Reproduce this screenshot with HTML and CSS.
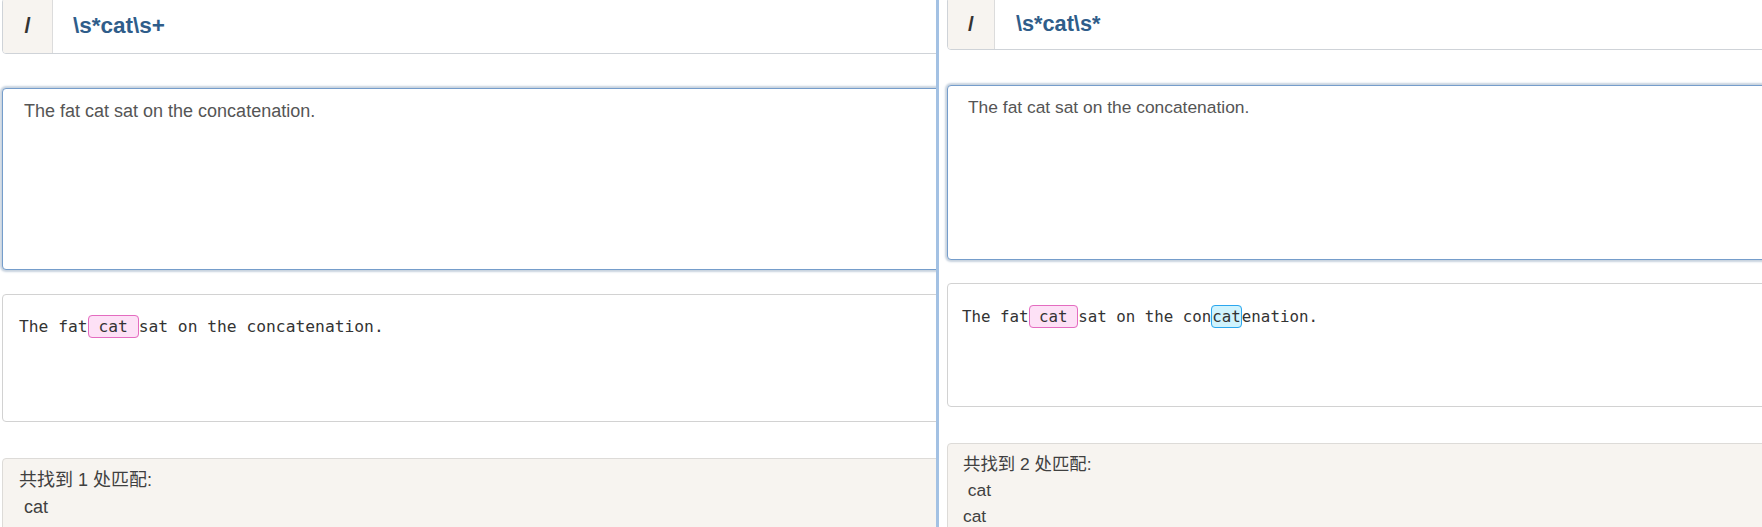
FILE: index.html
```html
<!DOCTYPE html>
<html lang="zh-CN">
<head>
<meta charset="utf-8">
<title>Regex tester</title>
<link rel="stylesheet" href="styles.css">
</head>
<body>
<div class="workspace">
  <section class="pane pane--left">
    <div class="pane__inner">
      <div class="regex-bar">
        <span class="regex-bar__delim">/</span>
        <span class="regex-bar__pattern">\s*cat\s+</span>
      </div>
      <textarea class="subject" readonly>The fat cat sat on the concatenation.</textarea>
      <div class="preview">The fat<span class="hl hl--pink"> cat </span>sat on the concatenation.</div>
      <div class="results">
        <div class="results__line">共找到 1 处匹配:</div>
        <div class="results__line"> cat</div>
      </div>
    </div>
  </section>
  <div class="divider"></div>
  <section class="pane pane--right">
    <div class="pane__inner">
      <div class="regex-bar">
        <span class="regex-bar__delim">/</span>
        <span class="regex-bar__pattern">\s*cat\s*</span>
      </div>
      <textarea class="subject" readonly>The fat cat sat on the concatenation.</textarea>
      <div class="preview">The fat<span class="hl hl--pink"> cat </span>sat on the con<span class="hl hl--cyan">cat</span>enation.</div>
      <div class="results">
        <div class="results__line">共找到 2 处匹配:</div>
        <div class="results__line"> cat</div>
        <div class="results__line">cat</div>
      </div>
    </div>
  </section>
</div>
</body>
</html>
```
FILE: styles.css
```css
* {
  box-sizing: border-box;
}

html, body {
  margin: 0;
  padding: 0;
  background: #ffffff;
}

body {
  font-family: "Liberation Sans", Arial, "Noto Sans CJK SC", sans-serif;
  color: #333333;
}

.workspace {
  display: flex;
  width: 1762px;
  height: 527px;
  overflow: hidden;
}

.pane {
  overflow: hidden;
  height: 527px;
  flex: none;
}

.pane--left {
  width: 936px;
  --pad-left: 2px;
  --box-w: 1000px;
  --bar-h: 56px;
  --bar-mt: -2px;
  --addon-w: 49px;
  --delim-size: 22px;
  --pattern-size: 22.5px;
  --pattern-pl: 20px;
  --gap1: 34px;
  --subject-h: 182px;
  --subject-size: 18px;
  --subject-lh: 25.7px;
  --subject-pt: 10px;
  --subject-pl: 21px;
  --gap2: 24px;
  --preview-h: 128px;
  --mono-size: 16.3px;
  --mono-lh: 24px;
  --preview-pt: 20px;
  --preview-pl: 16px;
  --gap3: 36px;
  --res-size: 18px;
  --res-lh: 26.5px;
  --res-pt: 8px;
  --res-pl: 16px;
}

.pane--right {
  width: 823px;
  --pad-left: 8px;
  --box-w: 900px;
  --bar-h: 53px;
  --bar-mt: -3px;
  --addon-w: 46px;
  --delim-size: 21px;
  --pattern-size: 21.7px;
  --pattern-pl: 21px;
  --gap1: 35px;
  --subject-h: 175px;
  --subject-size: 17.4px;
  --subject-lh: 24.9px;
  --subject-pt: 8.5px;
  --subject-pl: 20px;
  --gap2: 23px;
  --preview-h: 124px;
  --mono-size: 15.8px;
  --mono-lh: 23px;
  --preview-pt: 20.5px;
  --preview-pl: 14px;
  --gap3: 36px;
  --res-size: 17.4px;
  --res-lh: 25.8px;
  --res-pt: 8px;
  --res-pl: 15px;
}

.pane__inner {
  display: flex;
  flex-direction: column;
  align-items: flex-start;
  padding-left: var(--pad-left);
}

.divider {
  flex: none;
  width: 3px;
  height: 527px;
  background: #a3c1e3;
  box-shadow: -5px 0 9px -2px rgba(90, 110, 140, 0.22);
}

/* regex input group */
.regex-bar {
  display: flex;
  align-items: stretch;
  width: var(--box-w);
  height: var(--bar-h);
  margin-top: var(--bar-mt);
  border: 1px solid #cfd3d8;
  border-radius: 4px;
  background: #ffffff;
  overflow: hidden;
}

.regex-bar__delim {
  flex: none;
  width: calc(var(--addon-w) + 1px);
  display: flex;
  align-items: center;
  justify-content: center;
  background: #f7f4f0;
  border-right: 1px solid #dcdcdc;
  font-size: var(--delim-size);
  font-weight: bold;
  color: #333333;
}

.regex-bar__pattern {
  display: flex;
  align-items: center;
  padding-left: var(--pattern-pl);
  font-size: var(--pattern-size);
  font-weight: bold;
  color: #2f5d8a;
}

/* subject textarea (focused) */
.subject {
  display: block;
  width: var(--box-w);
  height: var(--subject-h);
  margin: var(--gap1) 0 0 0;
  padding: var(--subject-pt) 0 0 var(--subject-pl);
  border: 1px solid #759dcb;
  border-radius: 4px;
  box-shadow: 0 0 2px 2px #c8d3df;
  outline: none;
  resize: none;
  overflow: hidden;
  font-family: "Liberation Sans", Arial, sans-serif;
  font-size: var(--subject-size);
  line-height: var(--subject-lh);
  color: #555555;
  background: #ffffff;
}

/* highlighted preview */
.preview {
  width: var(--box-w);
  height: var(--preview-h);
  margin-top: var(--gap2);
  padding: var(--preview-pt) 0 0 var(--preview-pl);
  border: 1px solid #d2d2d2;
  border-radius: 4px;
  font-family: "DejaVu Sans Mono", "Liberation Mono", monospace;
  font-size: var(--mono-size);
  line-height: var(--mono-lh);
  color: #333333;
  white-space: pre;
}

.hl {
  border: 1px solid;
  border-radius: 4px;
  padding: 1px 0;
}

.hl--pink {
  background: #fde1f6;
  border-color: #e46cc0;
}

.hl--cyan {
  background: #d0f3fd;
  border-color: #2ba6ee;
}

/* result list */
.results {
  width: var(--box-w);
  height: 200px;
  margin-top: var(--gap3);
  padding: var(--res-pt) 0 0 var(--res-pl);
  border: 1px solid #dddbd8;
  border-radius: 4px;
  background: #f7f4f0;
  font-size: var(--res-size);
  line-height: var(--res-lh);
  color: #404040;
}

.results__line {
  white-space: pre;
}
```
